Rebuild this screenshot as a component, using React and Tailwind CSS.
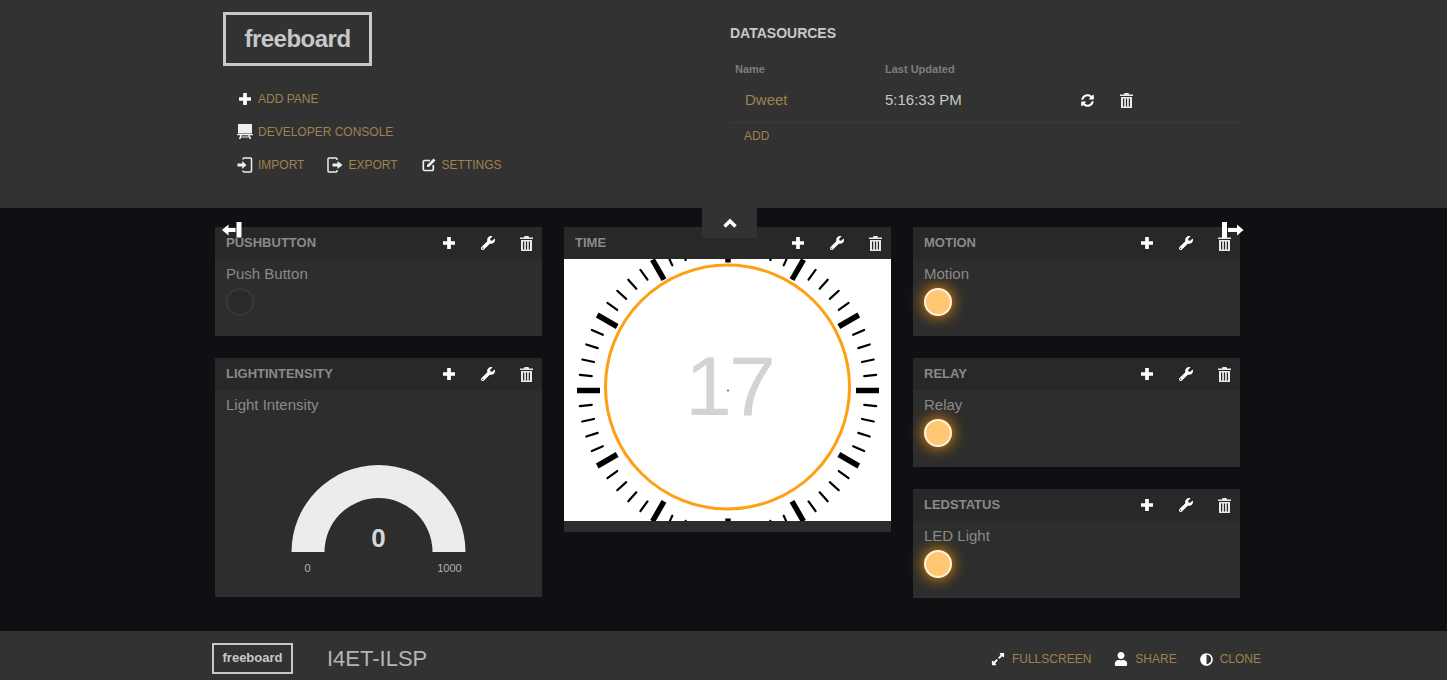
import React from 'react';
import { FaWrench, FaSyncAlt, FaUser, FaAdjust, FaExpandAlt } from 'react-icons/fa';

const font = { fontFamily: '"Liberation Sans", Arial, sans-serif' };

const PlusIcon = () => (
  <svg width="12" height="12" viewBox="0 0 13 13" className="fill-white">
    <path d="M4.500 0h4v4.500H13v4H8.500V13h-4V8.500H0v-4h4.500z" />
  </svg>
);

const TrashIcon = () => (
  <svg width="13" height="15" viewBox="0 0 13 15" className="fill-[#e8e8e8]">
    <path d="M4.500 0h4l.6 1.500H13V3H0V1.500h3.900zM1 4h11v11H1zM3 5.500v8h1.200v-8zM5.900 5.500v8h1.200v-8zM8.800 5.500v8H10v-8z" fillRule="evenodd" />
  </svg>
);

const ImportIcon = () => (
  <svg width="16" height="16" viewBox="0 0 16 16" fill="none" className="stroke-[#eee]">
    <path d="M6 2.500V2a1 1 0 0 1 1-1h6.500a1 1 0 0 1 1 1v12a1 1 0 0 1-1 1H7a1 1 0 0 1-1-1v-.5" strokeWidth="1.500" />
    <path d="M0.500 6.600h4.700V4L9.500 8l-4.300 4V9.400H0.500z" fill="#eee" stroke="none" />
  </svg>
);

const ExportIcon = () => (
  <svg width="16" height="16" viewBox="0 0 16 16" fill="none" className="stroke-[#eee]">
    <path d="M10 3V2a1 1 0 0 0-1-1H2a1 1 0 0 0-1 1v12a1 1 0 0 0 1 1h7a1 1 0 0 0 1-1v-1" strokeWidth="1.500" />
    <path d="M5.500 6.600h5V4L15.500 8l-5 4V9.400h-5z" fill="#eee" stroke="none" />
  </svg>
);

const EditIcon = () => (
  <svg width="14" height="14" viewBox="0 0 14 14" fill="none">
    <path d="M8 2.500H2.500a1.200 1.200 0 0 0-1.200 1.200v7.600a1.200 1.200 0 0 0 1.200 1.200h7.600a1.200 1.200 0 0 0 1.200-1.200V7" stroke="#eee" strokeWidth="1.700" />
    <path d="M11.500 0.500L13.500 2.500L7 9H5V7z" fill="#eee" />
  </svg>
);

const ConsoleIcon = () => (
  <svg width="16" height="15" viewBox="0 0 16 15" className="fill-[#eee]">
    <path d="M1 0h14v9.500H1zM0 10h16v1.300H0zM3.300 11.300h1.600L3.600 15H1.800zM11.100 11.300h1.600l1.500 3.700h-1.800zM4.500 12.500h7v1.100h-7z" />
  </svg>
);

const LeftHandle = () => (
  <svg width="20" height="16" viewBox="0 0 20 16" className="fill-white">
    <path d="M14.500 0H19.500V15.500H14.500zM0 8L6.500 2.500V6H13.500V10H6.500V13.500z" />
  </svg>
);

const RightHandle = () => (
  <svg width="22" height="16" viewBox="0 0 22 16" className="fill-white">
    <path d="M0 0H5V15.500H0zM21.500 8L15 2.500V6H6V10H15V13.500z" />
  </svg>
);

const NavLink = ({ icon, label, className = '' }) => (
  <div className={`flex items-center ${className}`}>
    <span className="flex w-[16px] justify-center text-white">{icon}</span>
    <span className="ml-[5px] text-[12px] uppercase text-[#a0814f]">{label}</span>
  </div>
);

const Pane = ({ title, children, className = '' }) => (
  <div className={`flex flex-col bg-[#2d2d2d] ${className}`}>
    <div className="flex h-[32px] shrink-0 items-center bg-[#282828] pl-[11px]">
      <span className="flex-1 text-[13px] font-bold uppercase text-[#8a8a8a]">{title}</span>
      <div className="mr-[9px] flex items-center">
        <PlusIcon />
        <FaWrench className="ml-[26px] text-[14px] text-white" />
        <span className="ml-[25px]"><TrashIcon /></span>
      </div>
    </div>
    {children}
  </div>
);

const Indicator = ({ label, on }) => (
  <div className="px-[11px] pt-[5px]">
    <div className="text-[15px] leading-[20px] text-[#8a8a8a]">{label}</div>
    <div
      className={
        on
          ? 'mt-[4px] h-[28px] w-[28px] rounded-full border-2 border-[#fdf1df] bg-[#ffc773] shadow-[0_0_15px_#ff9900]'
          : 'mt-[4px] h-[28px] w-[28px] rounded-full border-2 border-[#383838] bg-[#2a2a2a]'
      }
    />
  </div>
);

const Clock = () => {
  const cx = 164;
  const cy = 131.500;
  const ticks = Array.from({ length: 60 }, (_, i) => i * 6);
  return (
    <svg width="327" height="262" viewBox="0 0 327 262" className="block bg-white">
      {ticks.map((deg) => {
        const major = deg % 30 === 0;
        const a = (deg * Math.PI) / 180;
        const r1 = major ? 128 : 137;
        const r2 = major ? 151 : 149;
        return (
          <line
            key={deg}
            x1={cx + r1 * Math.cos(a)}
            y1={cy + r1 * Math.sin(a)}
            x2={cx + r2 * Math.cos(a)}
            y2={cy + r2 * Math.sin(a)}
            stroke="#000"
            strokeWidth={major ? 5.500 : 2.200}
            strokeLinecap={major ? 'butt' : 'round'}
          />
        );
      })}
      <circle cx="163.500" cy="128" r="122" fill="#fff" stroke="#ff9f12" strokeWidth="3" />
      <text x="165" y="156" textAnchor="middle" fontSize="84" letterSpacing="-3" fill="#d3d3d3" style={font}>17</text>
      <circle cx="164" cy="131.500" r="1" fill="#555" />
    </svg>
  );
};

const Gauge = () => (
  <svg width="327" height="175" viewBox="0 0 327 175" className="block">
    <path d="M76.500 130A87 87 0 0 1 250.500 130H217.500A54 54 0 0 0 109.500 130Z" fill="#edebeb" />
    <text x="163.500" y="125" textAnchor="middle" fontSize="26" fontWeight="700" fill="#d4d6da" style={font}>0</text>
    <text x="92.500" y="150" textAnchor="middle" fontSize="11" fill="#b3b3b3" style={font}>0</text>
    <text x="234.500" y="150" textAnchor="middle" fontSize="11" fill="#b3b3b3" style={font}>1000</text>
  </svg>
);

export default function App() {
  return (
    <div className="relative flex h-[680px] w-[1447px] flex-col overflow-hidden bg-[#101014]" style={font}>
      {/* Header */}
      <header className="flex h-[208px] shrink-0 bg-[#323232] pl-[215px]">
        <div className="w-[515px] pl-[8px] pt-[12px]">
          <div className="flex h-[54px] w-[149px] items-center justify-center border-[3px] border-[#c8c8c8] text-[24px] font-bold tracking-[-0.500px] text-[#c8c8c8]">
            freeboard
          </div>
          <div className="ml-[14px] mt-[16px] flex flex-col">
            <NavLink className="h-[33px]" icon={<PlusIcon />} label="Add Pane" />
            <NavLink className="h-[33px]" icon={<ConsoleIcon />} label="Developer Console" />
            <div className="flex h-[33px] items-center gap-[23px]">
              <NavLink icon={<ImportIcon />} label="Import" />
              <NavLink icon={<ExportIcon />} label="Export" />
              <NavLink icon={<EditIcon />} label="Settings" />
            </div>
          </div>
        </div>
        <div className="w-[510px] pt-[24px]">
          <div className="text-[14px] font-bold leading-[18px] text-[#c8c8c8]">DATASOURCES</div>
          <div className="mt-[21px] flex text-[11px] font-bold leading-[12px] text-[#7d7d7d]">
            <span className="ml-[5px] w-[150px]">Name</span>
            <span>Last Updated</span>
          </div>
          <div className="mt-[3px] flex h-[45px] items-center border-b border-[#3a3a3a]">
            <span className="ml-[15px] w-[140px] text-[15px] text-[#a0814f]">Dweet</span>
            <span className="w-[196px] text-[15px] text-[#c8c8c8]">5:16:33 PM</span>
            <FaSyncAlt className="text-[13px] text-white" />
            <span className="ml-[26px]"><TrashIcon /></span>
          </div>
          <div className="ml-[14px] mt-[6px] text-[12px] leading-[14px] text-[#a0814f]">ADD</div>
        </div>
      </header>

      {/* Board */}
      <main className="flex flex-1 gap-[22px] pl-[215px] pt-[19px]">
        <div className="flex w-[327px] flex-col gap-[22px]">
          <Pane title="PushButton" className="h-[109px]">
            <Indicator label="Push Button" />
          </Pane>
          <Pane title="LightIntensity" className="h-[239px]">
            <div className="px-[11px] pt-[5px] text-[15px] leading-[20px] text-[#8a8a8a]">Light Intensity</div>
            <div className="mt-[7px]"><Gauge /></div>
          </Pane>
        </div>
        <div className="w-[327px]">
          <Pane title="Time" className="h-[305px]">
            <Clock />
          </Pane>
        </div>
        <div className="flex w-[327px] flex-col gap-[22px]">
          <Pane title="Motion" className="h-[109px]">
            <Indicator label="Motion" on />
          </Pane>
          <Pane title="Relay" className="h-[109px]">
            <Indicator label="Relay" on />
          </Pane>
          <Pane title="LedStatus" className="h-[109px]">
            <Indicator label="LED Light" on />
          </Pane>
        </div>
      </main>

      {/* Footer */}
      <footer className="flex h-[49px] shrink-0 items-center bg-[#323232] pl-[212px]">
        <div className="mt-[5px] flex h-[31px] w-[81px] items-center justify-center border-2 border-[#c8c8c8] text-[13px] font-bold text-[#c8c8c8]">
          freeboard
        </div>
        <div className="ml-[34px] mt-[5px] text-[22px] text-[#b5b5b5]">I4ET-ILSP</div>
        <div className="ml-auto mr-[186px] mt-[7px] flex items-center gap-[23px]">
          <div className="flex items-center gap-[7px]">
            <FaExpandAlt className="text-[14px] text-white" />
            <span className="text-[12px] text-[#a0814f]">FULLSCREEN</span>
          </div>
          <div className="flex items-center gap-[7px]">
            <FaUser className="text-[14px] text-white" />
            <span className="text-[12px] text-[#a0814f]">SHARE</span>
          </div>
          <div className="flex items-center gap-[7px]">
            <FaAdjust className="text-[13px] text-white" />
            <span className="text-[12px] text-[#a0814f]">CLONE</span>
          </div>
        </div>
      </footer>

      {/* Overlays: board toggle and column resize handles */}
      <div className="absolute left-[702px] top-[208px] flex h-[30px] w-[55px] items-center justify-center bg-[#323232]">
        <svg width="14" height="10" viewBox="0 0 14 10" fill="none" stroke="#fff" strokeWidth="3.500">
          <path d="M1.500 8.500L7 3L12.500 8.500" />
        </svg>
      </div>
      <div className="absolute left-[222px] top-[222px]"><LeftHandle /></div>
      <div className="absolute left-[1222px] top-[222px]"><RightHandle /></div>
    </div>
  );
}
